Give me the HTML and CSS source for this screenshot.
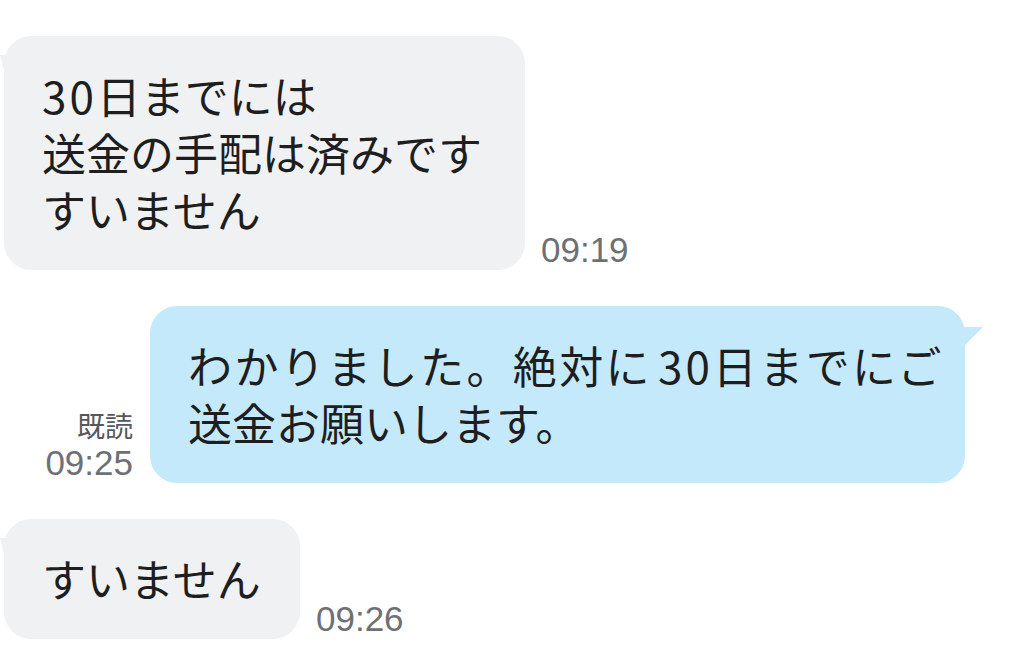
FILE: index.html
```
<!DOCTYPE html>
<html>
	<head>
		<meta charset="UTF-8">
		<title>トーク</title>
		<link rel="stylesheet" href="styles.css">
	</head>
	<body>
		<div class="chat">
			<div class="row in first">
				<div class="bubble gray w1"><span class="num">30</span>日までには<br>送金の手配は済みです<br>すいません</div>
				<div class="meta">09:19</div>
			</div>
			<div class="row out">
				<div class="meta">
					<div class="read">既読</div>
					<div>09:25</div>
				</div>
				<div class="bubble blue w2"><span class="spread">わかりました。絶対に<span class="num gap">30</span>日までにご</span><br>送金お願いします。</div>
			</div>
			<div class="row in">
				<div class="bubble gray w3">すいません</div>
				<div class="meta">09:26</div>
			</div>
		</div>
	</body>
</html>
```

FILE: styles.css
```
body{
	margin: 0;
	background: #fff;
}
.chat{
	padding-top: 36px;
	display: flex;
	flex-direction: column;
}
.row{
	display: flex;
	align-items: flex-end;
	gap: 16px;
	margin-top: 36px;
}
.row.first{
	margin-top: 0;
}
.row.in{
	margin-left: 4px;
}
.row.out{
	justify-content: flex-end;
	margin-right: 61px;
	gap: 17px;
}
.bubble{
	position: relative;
	box-sizing: border-box;
	padding: 31px 20px 32px 38px;
	border-radius: 27px;
	font-family: "Noto Sans CJK JP", sans-serif;
	font-size: 44px;
	line-height: 57px;
	color: #1e1e1e;
	white-space: nowrap;
}
.num{
	letter-spacing: 3px;
}
.spread{
	letter-spacing: 2.4px;
}
.num.gap{
	margin-left: 6px;
}
.gray{
	background: #f0f1f3;
}
.blue{
	background: #c4e9fb;
}
.w1{
	width: 521px;
}
.w2{
	width: 815px;
}
.w3{
	width: 296px;
}
.gray::before{
	content: "";
	position: absolute;
	left: -4px;
	top: 19px;
	width: 10px;
	height: 16px;
	background: #f0f1f3;
	clip-path: polygon(0 0, 100% 0, 100% 100%, 4px 100%);
}
.blue::after{
	content: "";
	position: absolute;
	right: -18px;
	top: 21px;
	width: 24px;
	height: 18px;
	background: #c4e9fb;
	clip-path: polygon(0 0, 100% 0, 6px 100%, 0 100%);
}
.meta{
	font-family: "Liberation Sans", Arial, sans-serif;
	font-size: 35px;
	color: #6d7074;
	text-align: right;
}
.read{
	font-family: "Noto Sans CJK JP", sans-serif;
	font-size: 28px;
	line-height: 36px;
	color: #55585c;
}
```
